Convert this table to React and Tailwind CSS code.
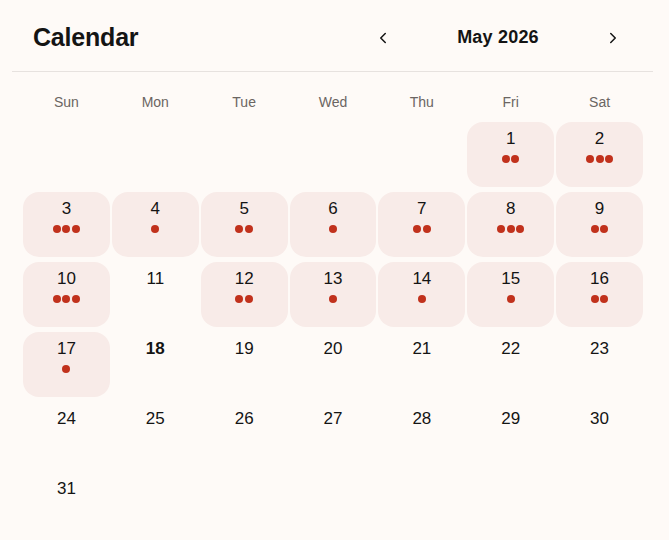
import React from "react";
import { ChevronLeft, ChevronRight } from "lucide-react";

const weekdays = ["Sun", "Mon", "Tue", "Wed", "Thu", "Fri", "Sat"];

// number of events per day in May 2026
const events = {
  1: 2, 2: 3, 3: 3, 4: 1, 5: 2, 6: 1, 7: 2, 8: 3, 9: 2,
  10: 3, 12: 2, 13: 1, 14: 1, 15: 1, 16: 2, 17: 1,
};

const today = 18;
const firstWeekday = 5; // May 1 2026 is a Friday
const daysInMonth = 31;

function DayCell({ day }) {
  if (!day) return <div className="h-[65px]" />;
  const count = events[day] || 0;

  return (
    <div
      className={`h-[65px] rounded-2xl flex flex-col items-center pt-[5px] ${
        count ? "bg-[#f8ebe8]" : ""
      }`}
    >
      <span
        className={`text-[17px] leading-6 text-[#141414] ${
          day === today ? "font-bold" : ""
        }`}
      >
        {day}
      </span>
      {count > 0 && (
        <div className="mt-[4px] flex gap-[1.5px]">
          {Array.from({ length: count }).map((_, i) => (
            <span key={i} className="w-2 h-2 rounded-full bg-[#c1311c]" />
          ))}
        </div>
      )}
    </div>
  );
}

export default function App() {
  const cells = [];
  for (let i = 0; i < firstWeekday; i++) cells.push(null);
  for (let d = 1; d <= daysInMonth; d++) cells.push(d);

  return (
    <div
      className="min-h-[540px] w-full bg-[#fefaf7] text-[#141414]"
      style={{ fontFamily: '"Liberation Sans", Arial, sans-serif' }}
    >
      <div className="ml-3 mr-4">
        {/* Header */}
        <div className="h-[72px] pt-[4px] pl-[21px] pr-[24px] flex items-center justify-between border-b border-[#e7e2df]">
          <h1 className="text-[25px] font-bold tracking-[-0.2px]">Calendar</h1>

          <div className="flex items-center">
            <button className="w-8 h-8 flex items-center justify-center text-[#141414]">
              <ChevronLeft size={18} strokeWidth={2} />
            </button>
            <div className="w-[198px] text-center text-[18px] font-bold tracking-[0.2px]">
              May 2026
            </div>
            <button className="w-8 h-8 flex items-center justify-center text-[#141414]">
              <ChevronRight size={18} strokeWidth={2} />
            </button>
          </div>
        </div>

        {/* Grid */}
        <div className="pl-[11px] pr-[10px]">
          <div className="grid grid-cols-7 gap-x-[2px] mt-[20px] mb-[10px]">
            {weekdays.map((w) => (
              <div key={w} className="h-5 text-center text-[14px] leading-5 text-[#6b6562]">
                {w}
              </div>
            ))}
          </div>

          <div className="grid grid-cols-7 gap-x-[2px] gap-y-[5px]">
            {cells.map((d, i) => (
              <DayCell key={i} day={d} />
            ))}
          </div>
        </div>
      </div>
    </div>
  );
}
